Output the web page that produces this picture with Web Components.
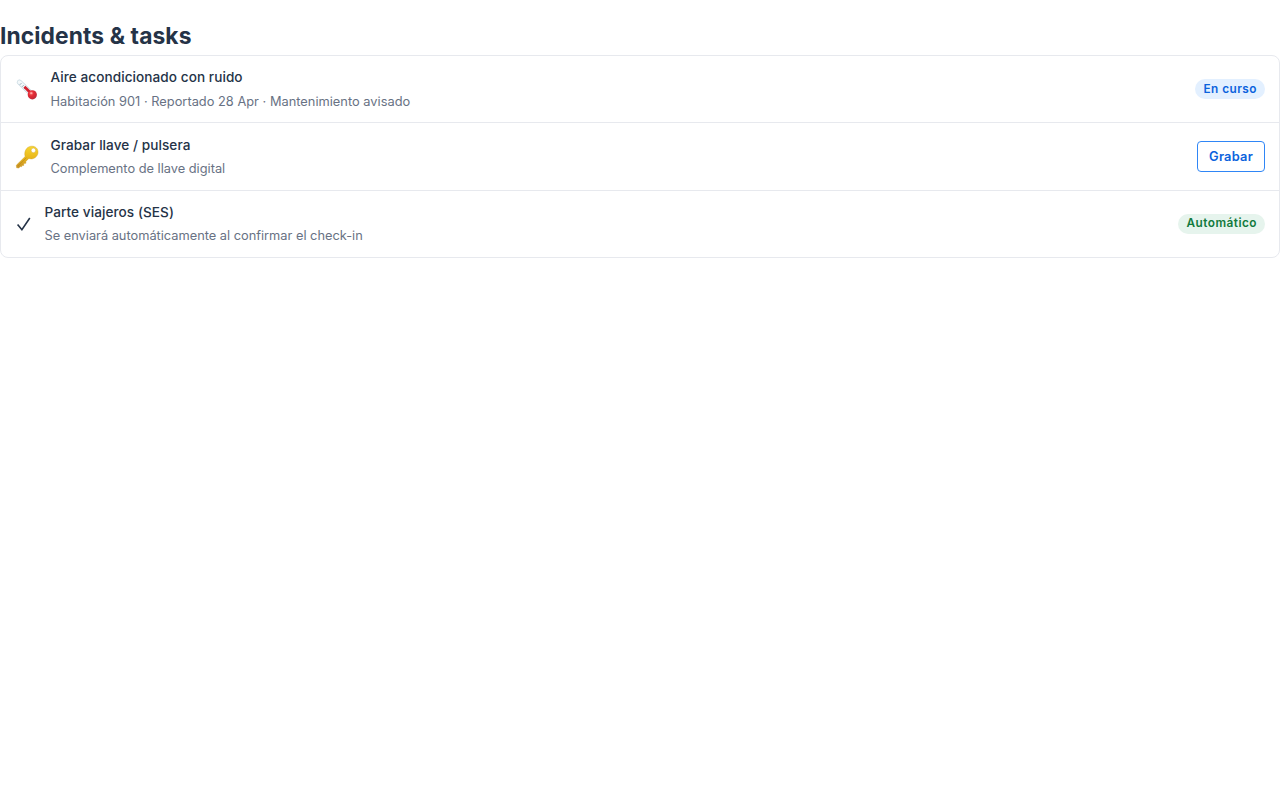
<!DOCTYPE html>
<html lang="es">
<head>
<meta charset="utf-8">
<title>Incidents &amp; tasks</title>
<style>
  body {
    margin: 0;
    background: #fff;
    color: #253347;
    font-family: Inter, "Liberation Sans", sans-serif;
  }
</style>
</head>
<body>

<incident-panel heading="Incidents &amp; tasks">
  <incident-row title-text="Aire acondicionado con ruido" note="Habitación 901 · Reportado 28 Apr · Mantenimiento avisado">
    <row-icon slot="icon" name="thermometer"></row-icon>
    <status-pill tone="info">En curso</status-pill>
  </incident-row>
  <incident-row title-text="Grabar llave / pulsera" note="Complemento de llave digital">
    <row-icon slot="icon" name="key"></row-icon>
    <outline-button>Grabar</outline-button>
  </incident-row>
  <incident-row title-text="Parte viajeros (SES)" note="Se enviará automáticamente al confirmar el check-in">
    <row-icon slot="icon" name="check"></row-icon>
    <status-pill tone="success">Automático</status-pill>
  </incident-row>
</incident-panel>

<script>
// Every element here is markup plus styles, so they share one tiny base:
// subclasses only supply render().
class BaseElement extends HTMLElement {
  connectedCallback() {
    if (this.shadowRoot) return;
    this.attachShadow({ mode: "open" }).innerHTML = this.render();
  }
}

class IncidentPanel extends BaseElement {
  render() {
    return `
      <style>
        :host { display: block; padding-top: 20px; }
        h2 { margin: 0; height: 35px; font-size: 22.8px; line-height: 32px; font-weight: 700; letter-spacing: 0.1px; }
        .list { border: 1px solid #e7e9ee; border-radius: 8px; background: #fff; }
      </style>
      <h2></h2>
      <div class="list"><slot></slot></div>`;
  }
  connectedCallback() {
    super.connectedCallback();
    this.shadowRoot.querySelector("h2").textContent = this.getAttribute("heading");
  }
}

class IncidentRow extends BaseElement {
  render() {
    return `
      <style>
        :host {
          display: flex; align-items: center; gap: 12px;
          box-sizing: border-box; height: 68px; padding: 0 14px;
          border-bottom: 1px solid #e7e9ee;
        }
        :host(:first-of-type) { height: 67px; }
        :host(:last-of-type) { border-bottom: 0; height: 66px; }
        .title { font-size: 13.6px; line-height: 24px; font-weight: 500; letter-spacing: 0.06px; }
        .note { font-size: 12.8px; line-height: 23px; color: #687284; }
        .body { flex: 1; min-width: 0; }
        :host(:first-of-type) .body { margin-bottom: -1px; }
        :host(:first-of-type) .note { line-height: 24px; padding-top: 1px; letter-spacing: 0.02px; }
        :host(:last-of-type) .body { padding-bottom: 1px; }
      </style>
      <slot name="icon"></slot>
      <div class="body">
        <div class="title"></div>
        <div class="note"></div>
      </div>
      <slot></slot>`;
  }
  connectedCallback() {
    super.connectedCallback();
    this.shadowRoot.querySelector(".title").textContent = this.getAttribute("title-text");
    this.shadowRoot.querySelector(".note").textContent = this.getAttribute("note");
  }
}

const icons = {
  thermometer: `
    <svg width="23.5" height="24" viewBox="0 0 23.5 24">
      <defs>
        <radialGradient id="bulb" cx=".38" cy=".35" r=".7">
          <stop offset="0" stop-color="#ff7474"/><stop offset=".4" stop-color="#e52b35"/><stop offset="1" stop-color="#b82a3b"/>
        </radialGradient>
      </defs>
      <path d="M4.4 5.2 15.5 15.8" stroke="#c5d7e0" stroke-width="5.2" stroke-linecap="round"/>
      <path d="M4.4 5.2 15.5 15.8" stroke="#f3f8fa" stroke-width="3.9" stroke-linecap="round"/>
      <path d="m4.6 8 2-2M6.8 10l2-2M9 12l1.6-1.6" stroke="#8fa5b0" stroke-width=".8"/>
      <path d="m9.4 9.8 6.4 6.2" stroke="#d3202e" stroke-width="2.8"/>
      <circle cx="17.3" cy="17.8" r="4.6" fill="url(#bulb)"/>
      <ellipse cx="16.3" cy="16.1" rx="1.2" ry=".9" fill="#ffb0ad"/>
    </svg>`,
  key: `
    <svg width="23.5" height="24" viewBox="0 0 23.5 24">
      <defs>
        <linearGradient id="gold" x1="0" y1="0" x2="0" y2="1">
          <stop offset="0" stop-color="#f7d62f"/><stop offset=".5" stop-color="#eab91d"/><stop offset="1" stop-color="#c68f24"/>
        </linearGradient>
      </defs>
      <path fill="url(#gold)" stroke="#cc9a1c" stroke-width=".4" fill-rule="evenodd"
        d="M16.5 1.2c3.7-.3 6.6 2.4 6.5 5.9 0 3.8-3.1 6.8-6.7 6.8-.9 0-1.7-.2-2.4-.5l-3.1 3 .1 1.9-2.1.1-.1 2.1-1.9-.1-.1 1.3-1.4-.1-1.5 1.4-2.2-.2-.3-2.6 8.8-8.6C9.2 8.1 10 5.5 11.7 3.5c1.2-1.4 2.9-2.2 4.8-2.3Z
           M18.4 3.1a2.3 2.3 0 1 0 0 4.6 2.3 2.3 0 0 0 0-4.6Z"/>
      <path d="m3 20.8 8.4-8.2" stroke="#aa7a1b" stroke-width=".5"/>
    </svg>`,
  check: `
    <svg width="17.5" height="24" viewBox="0 0 17.5 24">
      <path d="m2.6 12.5 4.3 5.2L14.8 6" fill="none" stroke="#253347" stroke-width="1.6"/>
    </svg>`,
};

class RowIcon extends BaseElement {
  render() {
    return `
      <style>
        :host { display: block; flex: none; }
        svg { display: block; }
      </style>
      ${icons[this.getAttribute("name")]}`;
  }
}

class StatusPill extends BaseElement {
  render() {
    return `
      <style>
        :host {
          display: block; flex: none; padding: 0 8px; border-radius: 10px;
          font-size: 11.8px; line-height: 20px; font-weight: 600; letter-spacing: 0.48px;
        }
        :host([tone="info"]) { background: #e3f0ff; color: #0b63dd; }
        :host([tone="success"]) { background: #e6f4ed; color: #127a3d; line-height: 18px; padding-bottom: 2px; }
      </style>
      <slot></slot>`;
  }
}

class OutlineButton extends BaseElement {
  render() {
    return `
      <style>
        :host { display: block; flex: none; }
        button {
          display: block; box-sizing: border-box; height: 31px; padding: 0 11px;
          border: 1px solid #2f86f6; border-radius: 4px;
          background: #fff; color: #0b63dd;
          font: 600 12.8px/29px Inter, "Liberation Sans", sans-serif;
          letter-spacing: 0.25px;
        }
      </style>
      <button type="button"><slot></slot></button>`;
  }
}

customElements.define("row-icon", RowIcon);
customElements.define("status-pill", StatusPill);
customElements.define("outline-button", OutlineButton);
customElements.define("incident-row", IncidentRow);
customElements.define("incident-panel", IncidentPanel);
</script>
</body>
</html>
